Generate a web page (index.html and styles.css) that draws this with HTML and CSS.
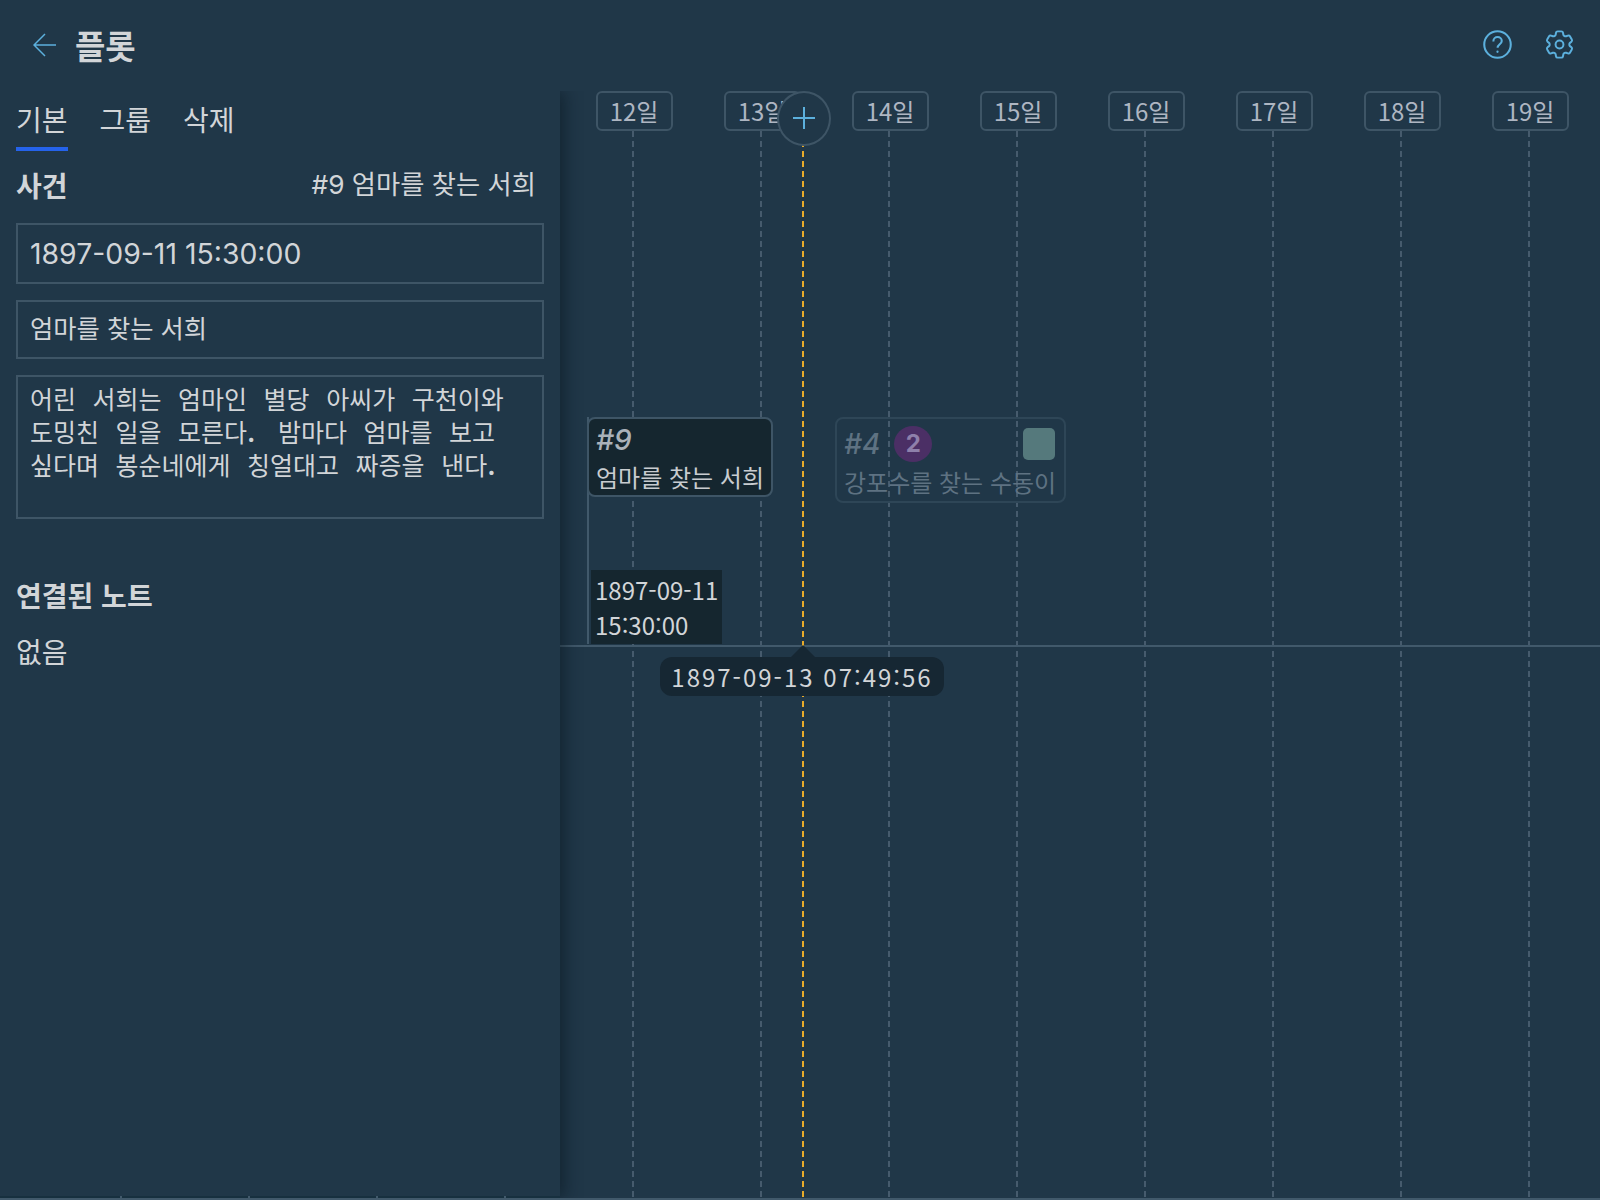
FILE: index.html
```html
<!DOCTYPE html>
<html lang="ko">
    <head>
        <meta charset="utf-8">
        <title>플롯</title>
        <link rel="stylesheet" href="styles.css">
    </head>
    <body>
        <div id="container">
            <div class="topbar">
                <div class="topbar-left">
                    <svg class="back-icon" viewBox="0 0 24 24" width="24" height="24"><path d="M23 12H1M12 1 1 12l11 11"/></svg>
                    <h1 class="page-title">플롯</h1>
                </div>
                <div class="topbar-right">
                    <svg class="help-icon" viewBox="0 0 28 28" width="29" height="29">
                        <circle cx="14" cy="14" r="12.8"/>
                        <path d="M10 11c0-2.6 1.9-4.2 4.1-4.2 2.3 0 4 1.6 4 3.700 0 3.300-4 3.300-4 6.700"/>
                        <circle class="help-dot" cx="14" cy="21" r="1.1"/>
                    </svg>
                    <svg class="gear-icon" viewBox="0 0 24 24" width="35" height="35">
                        <path d="M9.594 3.94c.09-.542.56-.94 1.11-.94h2.593c.55 0 1.02.398 1.11.94l.213 1.281c.063.374.313.686.645.87.074.04.147.083.22.127.324.196.72.257 1.075.124l1.217-.456a1.125 1.125 0 011.37.49l1.296 2.247a1.125 1.125 0 01-.26 1.431l-1.003.827c-.293.24-.438.613-.431.992a6.759 6.759 0 010 .255c-.007.378.138.75.43.99l1.005.828c.424.35.534.954.26 1.43l-1.298 2.247a1.125 1.125 0 01-1.369.491l-1.217-.456c-.355-.133-.75-.072-1.076.124a6.57 6.57 0 01-.22.128c-.331.183-.581.495-.644.869l-.213 1.28c-.09.543-.56.941-1.11.941h-2.594c-.55 0-1.02-.398-1.11-.94l-.213-1.281c-.062-.374-.312-.686-.644-.87a6.52 6.52 0 01-.22-.127c-.325-.196-.72-.257-1.076-.124l-1.217.456a1.125 1.125 0 01-1.369-.49l-1.297-2.247a1.125 1.125 0 01.26-1.431l1.004-.827c.292-.24.437-.613.43-.992a6.932 6.932 0 010-.255c.007-.378-.138-.75-.43-.99l-1.004-.828a1.125 1.125 0 01-.26-1.43l1.297-2.247a1.125 1.125 0 011.37-.491l1.216.456c.356.133.751.072 1.076-.124.072-.044.146-.087.22-.128.332-.183.582-.495.644-.869l.214-1.281z"/>
                        <circle cx="12" cy="12" r="2.700"/>
                    </svg>
                </div>
            </div>
            <div class="main">
                <div class="panel">
                    <ul class="tabs">
                        <li class="tab tab-active">기본</li>
                        <li class="tab">그룹</li>
                        <li class="tab">삭제</li>
                    </ul>
                    <div class="section-head">
                        <h2 class="section-title">사건</h2>
                        <span class="section-ref">#9 엄마를 찾는 서희</span>
                    </div>
                    <div class="field field-date">1897-09-11 15:30:00</div>
                    <div class="field field-name">엄마를 찾는 서희</div>
                    <div class="field field-desc">어린 서희는 엄마인 별당 아씨가 구천이와<br>도밍친 일을 모른다<span class="stop">.</span> 밤마다 엄마를 보고<br>싶다며 봉순네에게 칭얼대고 짜증을 낸다<span class="stop">.</span></div>
                    <h2 class="section-title notes-title">연결된 노트</h2>
                    <p class="notes-empty">없음</p>
                </div>
                <div class="timeline">
                    <div class="ticks">
                        <div class="tick"><span class="tick-label">12일</span><i class="tick-line"></i></div>
                        <div class="tick"><span class="tick-label">13일</span><i class="tick-line"></i></div>
                        <div class="tick"><span class="tick-label">14일</span><i class="tick-line"></i></div>
                        <div class="tick"><span class="tick-label">15일</span><i class="tick-line"></i></div>
                        <div class="tick"><span class="tick-label">16일</span><i class="tick-line"></i></div>
                        <div class="tick"><span class="tick-label">17일</span><i class="tick-line"></i></div>
                        <div class="tick"><span class="tick-label">18일</span><i class="tick-line"></i></div>
                        <div class="tick"><span class="tick-label">19일</span><i class="tick-line"></i></div>
                    </div>
                    <div class="axis"></div>
                    <div class="cursor-line"></div>
                    <div class="add-button">
                        <svg viewBox="0 0 22 22" width="22" height="22"><path d="M11 0v22M0 11h22"/></svg>
                    </div>
                    <div class="event-stem"></div>
                    <div class="event event-current">
                        <div class="event-id">#9</div>
                        <div class="event-name">엄마를 찾는 서희</div>
                    </div>
                    <div class="event-date">1897-09-11<br>15:30:00</div>
                    <div class="event event-faded">
                        <div class="event-top">
                            <span class="event-id">#4</span>
                            <span class="event-badge">2</span>
                            <span class="event-swatch"></span>
                        </div>
                        <div class="event-name">강포수를 찾는 수동이</div>
                    </div>
                    <div class="cursor-tip">1897-09-13 07:49:56</div>
                </div>
            </div>
            <div class="bottom-strip"></div>
        </div>
    </body>
</html>
```

FILE: styles.css
```css
* {
    box-sizing: border-box;
}

body {
    margin: 0;
    background-color: #203748;
    color: #d2d5d8;
    font-family: "Inter", "Noto Sans CJK KR", sans-serif;
}

#container {
    display: flex;
    flex-direction: column;
    width: 1600px;
    height: 1200px;
    overflow: hidden;
}

.topbar {
    display: flex;
    justify-content: space-between;
    align-items: center;
    height: 91px;
    padding: 0 23px 2px 33px;
}

.topbar-left,
.topbar-right {
    display: flex;
    align-items: center;
}

.back-icon {
    fill: none;
    stroke: #5cb0dd;
    stroke-width: 1.5;
}

.page-title {
    margin: 0 0 0 18px;
    font-size: 33px;
    font-weight: 700;
    font-family: "Noto Sans CJK KR", sans-serif;
}

.topbar-right {
    gap: 30px;
}

.help-icon,
.gear-icon {
    fill: none;
    stroke: #5cb0dd;
}

.help-icon {
    stroke-width: 2;
}

.help-dot {
    fill: #5cb0dd;
    stroke: none;
}

.gear-icon {
    stroke-width: 1.35;
}

.main {
    display: flex;
    flex: 1;
    min-height: 0;
}

.panel {
    position: relative;
    z-index: 5;
    width: 560px;
    padding: 0 16px;
    background-color: #203748;
    box-shadow: 4px 0 16px rgba(8, 20, 30, 0.55);
    clip-path: inset(0 -24px 0 0);
}

/* ruler ticks peeking out under the panel */
.panel::after {
    content: "";
    position: absolute;
    left: 0;
    right: 0;
    bottom: 0;
    height: 2px;
    background: repeating-linear-gradient(to right, #17303f 0 120px, #41596b 120px 122px, #17303f 122px 128px);
}

.tabs {
    display: flex;
    gap: 32px;
    list-style-type: none;
    margin: 0;
    padding: 8px 0 0;
    font-size: 28px;
    font-family: "Noto Sans CJK KR", sans-serif;
}

.tab {
    height: 52px;
    line-height: 40px;
}

.tab-active {
    border-bottom: 4px solid #2563eb;
}

.section-head {
    display: flex;
    justify-content: space-between;
    align-items: center;
    height: 44px;
    margin-top: 11px;
    padding-right: 8px;
}

.section-title {
    margin: 2px 0 0;
    font-size: 28px;
    font-weight: 700;
    font-family: "Noto Sans CJK KR", sans-serif;
}

.section-ref {
    margin-bottom: 4px;
    font-size: 26.3px;
}

.field {
    border: 2px solid #3e5566;
    padding: 0 12px;
    margin-bottom: 16px;
}

.field-date {
    height: 61px;
    margin-top: 17px;
    font-size: 28.4px;
    line-height: 58px;
}

.field-name {
    height: 59px;
    font-size: 25.3px;
    line-height: 54px;
}

.field-desc {
    height: 144px;
    padding-top: 7px;
    font-size: 25px;
    line-height: 33px;
    word-spacing: 9.5px;
}

.stop {
    font-weight: 700;
    letter-spacing: 6px;
}

.notes-title {
    margin-top: 56px;
    line-height: 40px;
}

.notes-empty {
    margin: 18px 0 0;
    font-size: 28px;
    line-height: 40px;
}

.timeline {
    position: relative;
    flex: 1;
    padding-left: 9px;
}

.ticks {
    display: flex;
    height: 100%;
}

.tick {
    display: flex;
    flex-direction: column;
    align-items: center;
    width: 128px;
}

.tick-label {
    width: 77px;
    height: 40px;
    margin-left: 2px;
    border: 2px solid #3e5566;
    border-radius: 6px;
    color: #aeb6c2;
    font-family: "Noto Sans CJK KR", sans-serif;
    font-size: 24px;
    line-height: 35px;
    text-align: center;
}

.tick-line {
    flex: 1;
    width: 2px;
    background: repeating-linear-gradient(to bottom, #465b6d 0 6px, transparent 6px 10px);
}

.axis {
    position: absolute;
    left: 0;
    right: 0;
    top: 554px;
    height: 2px;
    background-color: #41596b;
}

.cursor-line {
    position: absolute;
    left: 242px;
    top: 50px;
    bottom: 0;
    width: 2px;
    background: repeating-linear-gradient(to bottom, #e8ab2a 0 6px, transparent 6px 10px);
}

.add-button {
    position: absolute;
    left: 217px;
    top: 0;
    display: flex;
    align-items: center;
    justify-content: center;
    width: 54px;
    height: 55px;
    padding-bottom: 2px;
    border: 2px solid #3e5566;
    border-radius: 50%;
    background-color: #203748;
}

.add-button svg {
    fill: none;
    stroke: #5cb0dd;
    stroke-width: 2;
}

.event {
    position: absolute;
    border-radius: 8px;
    font-family: "Noto Sans CJK KR", sans-serif;
    white-space: nowrap;
}

.event-current {
    left: 27px;
    top: 326px;
    width: 186px;
    height: 80px;
    border: 2px solid #3e5566;
    padding: 1px 7px 0;
    background-color: #15262f;
    color: #c8ccd0;
}

.event-id {
    font-size: 28px;
    font-style: italic;
    font-weight: 500;
    font-family: "Inter", sans-serif;
    line-height: 41px;
    color: #aab2ba;
}

.event-name {
    font-size: 24px;
    line-height: 32px;
}

.event-stem {
    position: absolute;
    left: 27px;
    top: 326px;
    width: 2px;
    height: 227px;
    background-color: #41596b;
}

.event-date {
    position: absolute;
    left: 31px;
    top: 479px;
    width: 131px;
    height: 74px;
    padding: 2px 4px;
    background-color: #15262f;
    font-family: "Noto Sans CJK JP", sans-serif;
    font-size: 24px;
    line-height: 35px;
    white-space: nowrap;
}

.event-faded {
    left: 275px;
    top: 326px;
    width: 231px;
    height: 86px;
    border: 2px solid #2e4657;
    padding: 0 7px;
    color: #5e7282;
}

.event-faded .event-id {
    color: #5e7282;
}

.event-top {
    display: flex;
    align-items: center;
    height: 47px;
    padding-top: 3px;
}

.event-badge {
    width: 38px;
    height: 36px;
    margin-left: 14px;
    border-radius: 50%;
    background-color: #4b2f65;
    color: #8e80aa;
    font-size: 24px;
    font-weight: 700;
    font-family: "Inter", sans-serif;
    line-height: 36px;
    text-align: center;
}

.event-swatch {
    width: 32px;
    height: 32px;
    margin-left: auto;
    margin-right: 2px;
    border-radius: 5px;
    background-color: #55797c;
}

.cursor-tip {
    position: absolute;
    left: 100px;
    top: 566px;
    width: 284px;
    height: 39px;
    border-radius: 12px;
    background-color: #162733;
    font-family: "Noto Sans CJK JP", sans-serif;
    font-size: 24px;
    letter-spacing: 2px;
    line-height: 39px;
    text-align: center;
}

.cursor-tip::before {
    content: "";
    position: absolute;
    left: 131px;
    top: -12px;
    border-left: 12px solid transparent;
    border-right: 12px solid transparent;
    border-bottom: 12px solid #162733;
}

.bottom-strip {
    height: 2px;
    background-color: #41596b;
}
```
